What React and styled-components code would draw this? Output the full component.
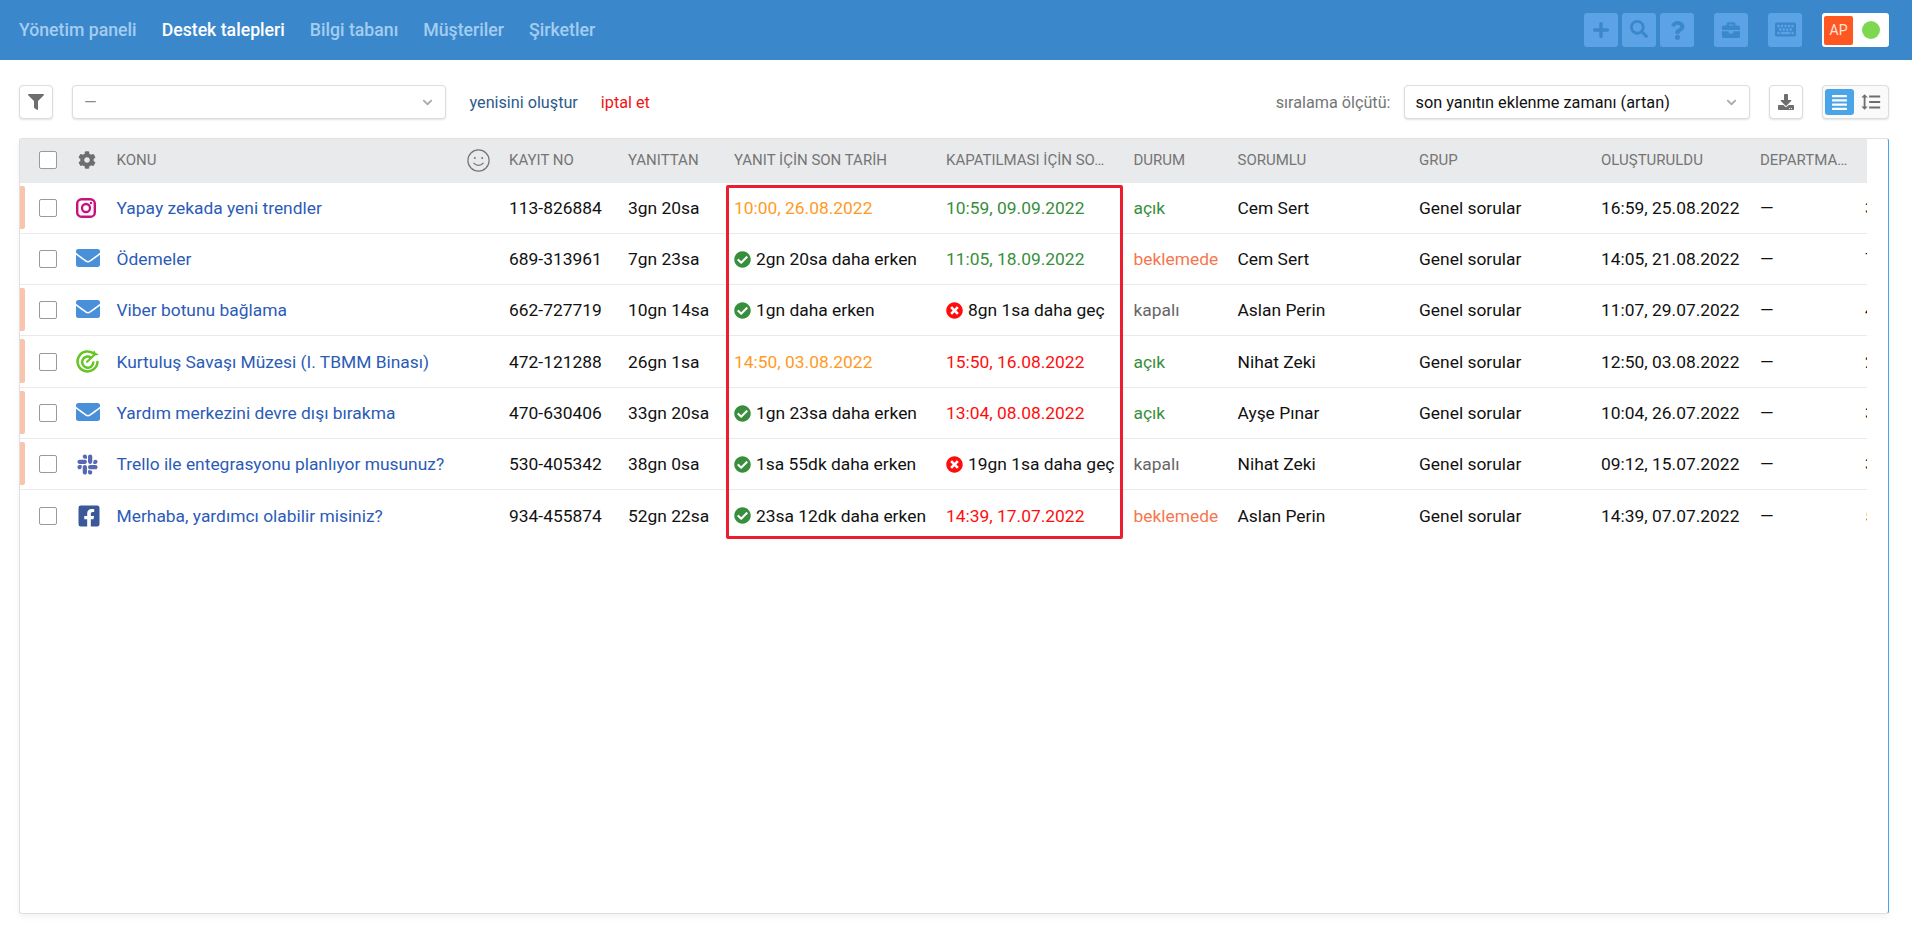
import React from "react";
import styled, { createGlobalStyle } from "styled-components";
import {
  FaPlus, FaSearch, FaQuestion, FaBriefcase, FaKeyboard, FaFilter, FaCog,
  FaEnvelope, FaSlack, FaFacebookSquare, FaCheckCircle, FaTimesCircle,
  FaDownload, FaAlignJustify, FaChevronDown,
} from "react-icons/fa";
import { MdFormatLineSpacing } from "react-icons/md";

const Global = createGlobalStyle`
  html, body { margin: 0; padding: 0; background: #fff; }
  body { font-family: Roboto, "Liberation Sans", sans-serif; overflow: hidden; }
  * { box-sizing: border-box; }
`;

const Page = styled.div`
  height: 939px; display: flex; flex-direction: column; padding-bottom: 25px;
`;
const Nav = styled.header`
  height: 60px; flex: none; background: #3b87cc; display: flex; align-items: center;
  padding: 0 23px 0 19px;
`;
const NavLink = styled.a`
  font-size: 17.7px; font-weight: 500; margin-right: 25px;
  color: ${p => (p.$active ? "#fff" : "#a3cdf0")};
`;
const NavSpacer = styled.div`flex: 1;`;
const NavButton = styled.button`
  width: 34px; height: 34px; border: 0; padding: 0 0 ${p => p.$lift || 0}px; border-radius: 3px;
  background: #5ca3e6; color: #3b87cc; display: flex; align-items: center; justify-content: center;
  margin-left: ${p => p.$gap}px; font-size: ${p => p.$size || 18}px;
`;
const UserBox = styled.div`
  width: 67px; height: 34px; margin-left: 20px; background: #fff; border-radius: 3px;
  display: flex; align-items: center; padding: 0 9px 0 2px; justify-content: space-between;
`;
const Avatar = styled.div`
  width: 29px; height: 29px; background: #ff5722; color: #ffe5dc; border-radius: 2px;
  font-size: 14px; display: flex; align-items: center; justify-content: center;
`;
const Online = styled.div`
  width: 18px; height: 18px; border-radius: 50%; background: #7dd84f;
`;
const Toolbar = styled.div`
  display: flex; align-items: center; height: 34px; margin: 25px 23px 19px 19px; flex: none;
`;
const IconBtn = styled.button`
  width: 34px; height: 34px; padding: 0; background: #fff; border: 1px solid #ddd; border-radius: 4px;
  box-shadow: 0 1px 2px rgba(0,0,0,.12); color: #6e6e6e; display: flex; align-items: center; justify-content: center;
  font-size: 16px; flex: none; margin-left: ${p => p.$ml || 0}px;
`;
const SelectBox = styled.div`
  width: ${p => p.$w}px; height: 34px; background: #fff; border: 1px solid #ddd; border-radius: 4px;
  box-shadow: 0 1px 2px rgba(0,0,0,.12); display: flex; align-items: center; justify-content: space-between;
  padding: 0 12px 0 11px; font-size: 16.3px; color: ${p => (p.$muted ? "#8a8a8a" : "#111")}; flex: none;
  margin-left: ${p => p.$ml || 0}px;
  svg { color: #a9a9a9; font-size: 11px; }
`;
const ActionLink = styled.a`
  font-size: 16.2px; color: ${p => p.$color}; margin-left: ${p => p.$ml}px;
`;
const SortLabel = styled.span`
  margin-left: auto; font-size: 16.2px; color: #757575; margin-right: 13px;
`;
const Toggle = styled.div`
  width: 67px; height: 34px; margin-left: 19px; background: #fafafa; border: 1px solid #ddd; border-radius: 4px;
  box-shadow: 0 1px 2px rgba(0,0,0,.12); display: flex; align-items: center; padding: 0 6px 0 2px;
  justify-content: space-between;
`;
const ToggleOn = styled.div`
  width: 29px; height: 26px; border-radius: 3px; background: #4aa5e8; color: #fff;
  display: flex; align-items: center; justify-content: center; font-size: 17px;
`;
const ToggleOff = styled.div`
  color: #6e6e6e; display: flex; font-size: 22px;
`;
const Card = styled.section`
  position: relative; flex: 1; margin: 0 23px 0 19px; background: #fff;
  border: 1px solid #e0e0e0; border-right: 1.5px solid #4aa3e8; border-radius: 3px;
  box-shadow: 0 3px 6px rgba(0,0,0,.05);
`;
const Scroller = styled.div`
  width: 1847px; overflow: hidden;
`;
const cols = "48px 48.5px 392.5px 119px 106px 212px 187.5px 104px 181.5px 182px 159px 105px 60px";
const HeadRow = styled.div`
  display: grid; grid-template-columns: ${cols}; height: 44px; background: #e9eaec; align-items: center;
  font-size: 15px; color: #757575; white-space: nowrap; padding-bottom: 2px;
`;
const Row = styled.div`
  position: relative; display: grid; grid-template-columns: ${cols}; align-items: center;
  height: ${p => (p.$tall ? 52 : 51)}px; font-size: 17.4px; color: #111; white-space: nowrap;
  border-bottom: ${p => (p.$last ? "0" : "1px solid #eaeaea")};
`;
const Accent = styled.span`
  position: absolute; left: 0; top: 3px; bottom: 4px; width: 5px; background: #f9c4ad;
  border-radius: 0 2px 2px 0;
`;
const CheckCell = styled.div`
  padding-left: 19px; display: flex;
`;
const Check = styled.span`
  width: 18px; height: 18px; border: 1.5px solid #9a9a9a; border-radius: 2px; background: #fff;
`;
const IconCell = styled.div`
  display: flex; align-items: center; color: ${p => p.$color || "#6e6e6e"};
  font-size: ${p => p.$size || 24}px; padding-left: ${p => p.$pl ?? 7.5}px; margin-top: ${p => p.$mt || 0}px;
`;
const HeadTopic = styled.div`
  display: flex; align-items: center; justify-content: space-between; padding-right: 19.5px;
`;
const Topic = styled.a`
  color: #2c5bb7;
`;
const Tone = styled.span`
  color: ${p => p.$c};
`;
const Badge = styled.span`
  display: flex; align-items: center; gap: 5px;
  svg { font-size: 17px; color: ${p => p.$c}; flex: none; }
`;
const RedBox = styled.div`
  position: absolute; left: 706px; top: 46px; width: 397px; height: 354px;
  border: 3px solid #ed1c2e; border-radius: 2px; pointer-events: none;
`;
const Clip = styled.div`overflow: hidden;`;

const Target = () => (
  <svg width="1em" height="1em" viewBox="0 0 24 24" fill="none" stroke="#63c51f" strokeLinecap="round">
    <path d="M19 4.2A10.4 10.4 0 1 0 22.4 12.5" strokeWidth="2.6" />
    <path d="M15.6 8A5.8 5.8 0 1 0 18 13" strokeWidth="2.6" />
    <path d="M11.5 12.3 L20.5 3.8" strokeWidth="2.2" />
    <path d="M19 1.6 L19.4 4.4 L22.4 4.8" strokeWidth="1.6" />
  </svg>
);

const Instagram = () => (
  <svg width="1em" height="1em" viewBox="0 0 20 20" fill="none" stroke="#c9107f">
    <rect x="1.2" y="1.2" width="17.6" height="17.6" rx="4.4" strokeWidth="2.4" />
    <circle cx="10" cy="10" r="4" strokeWidth="2.3" />
    <circle cx="15" cy="5" r="1.2" fill="#c9107f" stroke="none" />
  </svg>
);

const Smile = () => (
  <svg width="23" height="23" viewBox="0 0 23 23" fill="none" stroke="#757575" strokeWidth="1.2">
    <circle cx="11.5" cy="11.5" r="10.6" />
    <circle cx="7.8" cy="9" r="1" fill="#757575" stroke="none" />
    <circle cx="15.2" cy="9" r="1" fill="#757575" stroke="none" />
    <path d="M6.8 14.2c2.4 2.8 7 2.8 9.4 0" strokeLinecap="round" />
  </svg>
);

const sources = {
  ig: { icon: <Instagram />, color: "#c9107f", size: 20 },
  mail: { icon: <FaEnvelope />, color: "#4a90d9", size: 24, mt: -3 },
  target: { icon: <Target />, color: "#63c51f", size: 23 },
  slack: { icon: <FaSlack />, color: "#5867b4", size: 23 },
  fb: { icon: <FaFacebookSquare />, color: "#3b5998", size: 24, pl: 9 },
};

const ok = "#388e3c", red = "#ff0d0d", orange = "#ff9a1f";
const When = ({ c, t }) => <Tone $c={c}>{t}</Tone>;
const Early = ({ t }) => <Badge $c={ok}><FaCheckCircle />{t}</Badge>;
const Late = ({ t }) => <Badge $c={red}><FaTimesCircle />{t}</Badge>;
const statusColor = { "açık": "#388e3c", "beklemede": "#f5774e", "kapalı": "#666" };

const rows = [
  { src: "ig", bar: 1, topic: "Yapay zekada yeni trendler", no: "113-826884", reply: "3gn 20sa", a: <When c={orange} t="10:00, 26.08.2022" />, b: <When c={ok} t="10:59, 09.09.2022" />, st: "açık", who: "Cem Sert", at: "16:59, 25.08.2022", next: "3" },
  { src: "mail", topic: "Ödemeler", no: "689-313961", reply: "7gn 23sa", a: <Early t="2gn 20sa daha erken" />, b: <When c={ok} t="11:05, 18.09.2022" />, st: "beklemede", who: "Cem Sert", at: "14:05, 21.08.2022", next: "7" },
  { src: "mail", bar: 1, topic: "Viber botunu bağlama", no: "662-727719", reply: "10gn 14sa", a: <Early t="1gn daha erken" />, b: <Late t="8gn 1sa daha geç" />, st: "kapalı", who: "Aslan Perin", at: "11:07, 29.07.2022", next: "4" },
  { src: "target", bar: 1, tall: 1, topic: "Kurtuluş Savaşı Müzesi (I. TBMM Binası)", no: "472-121288", reply: "26gn 1sa", a: <When c={orange} t="14:50, 03.08.2022" />, b: <When c={red} t="15:50, 16.08.2022" />, st: "açık", who: "Nihat Zeki", at: "12:50, 03.08.2022", next: "2" },
  { src: "mail", bar: 1, topic: "Yardım merkezini devre dışı bırakma", no: "470-630406", reply: "33gn 20sa", a: <Early t="1gn 23sa daha erken" />, b: <When c={red} t="13:04, 08.08.2022" />, st: "açık", who: "Ayşe Pınar", at: "10:04, 26.07.2022", next: "3" },
  { src: "slack", bar: 1, topic: "Trello ile entegrasyonu planlıyor musunuz?", no: "530-405342", reply: "38gn 0sa", a: <Early t="1sa 55dk daha erken" />, b: <Late t="19gn 1sa daha geç" />, st: "kapalı", who: "Nihat Zeki", at: "09:12, 15.07.2022", next: "3" },
  { src: "fb", last: 1, topic: "Merhaba, yardımcı olabilir misiniz?", no: "934-455874", reply: "52gn 22sa", a: <Early t="23sa 12dk daha erken" />, b: <When c={red} t="14:39, 17.07.2022" />, st: "beklemede", who: "Aslan Perin", at: "14:39, 07.07.2022", next: "5" },
];

export default function App() {
  return (
    <Page>
      <Global />
      <Nav>
        <NavLink>Yönetim paneli</NavLink>
        <NavLink $active>Destek talepleri</NavLink>
        <NavLink>Bilgi tabanı</NavLink>
        <NavLink>Müşteriler</NavLink>
        <NavLink>Şirketler</NavLink>
        <NavSpacer />
        <NavButton $gap={0}><FaPlus /></NavButton>
        <NavButton $gap={4} $lift={2}><FaSearch /></NavButton>
        <NavButton $gap={4} $size={19}><FaQuestion /></NavButton>
        <NavButton $gap={20}><FaBriefcase /></NavButton>
        <NavButton $gap={20} $size={21} $lift={2}><FaKeyboard /></NavButton>
        <UserBox><Avatar>AP</Avatar><Online /></UserBox>
      </Nav>
      <Toolbar>
        <IconBtn><FaFilter /></IconBtn>
        <SelectBox $w={373.5} $ml={19} $muted>—<FaChevronDown /></SelectBox>
        <ActionLink $color="#2b5a8c" $ml={24}>yenisini oluştur</ActionLink>
        <ActionLink $color="#f01414" $ml={23}>iptal et</ActionLink>
        <SortLabel>sıralama ölçütü:</SortLabel>
        <SelectBox $w={346.5}>son yanıtın eklenme zamanı (artan)<FaChevronDown /></SelectBox>
        <IconBtn $ml={19}><FaDownload /></IconBtn>
        <Toggle>
          <ToggleOn><FaAlignJustify /></ToggleOn>
          <ToggleOff><MdFormatLineSpacing /></ToggleOff>
        </Toggle>
      </Toolbar>
      <Card>
        <Scroller>
          <HeadRow>
            <CheckCell><Check /></CheckCell>
            <IconCell $size={18} $pl={10}><FaCog /></IconCell>
            <HeadTopic>KONU<Smile /></HeadTopic>
            <div>KAYIT NO</div>
            <div>YANITTAN</div>
            <div>YANIT İÇİN SON TARİH</div>
            <div>KAPATILMASI İÇİN SO…</div>
            <div>DURUM</div>
            <div>SORUMLU</div>
            <div>GRUP</div>
            <div>OLUŞTURULDU</div>
            <div>DEPARTMA…</div>
            <div />
          </HeadRow>
          {rows.map(r => {
            const s = sources[r.src];
            return (
              <Row key={r.no} $tall={r.tall} $last={r.last}>
                {r.bar ? <Accent /> : null}
                <CheckCell><Check /></CheckCell>
                <IconCell $color={s.color} $size={s.size} $mt={s.mt} $pl={s.pl}>{s.icon}</IconCell>
                <div><Topic>{r.topic}</Topic></div>
                <div>{r.no}</div>
                <div>{r.reply}</div>
                <div>{r.a}</div>
                <div>{r.b}</div>
                <Tone $c={statusColor[r.st]}>{r.st}</Tone>
                <div>{r.who}</div>
                <div>Genel sorular</div>
                <div>{r.at}</div>
                <div>—</div>
                <Clip>{r.next}</Clip>
              </Row>
            );
          })}
        </Scroller>
        <RedBox />
      </Card>
    </Page>
  );
}
